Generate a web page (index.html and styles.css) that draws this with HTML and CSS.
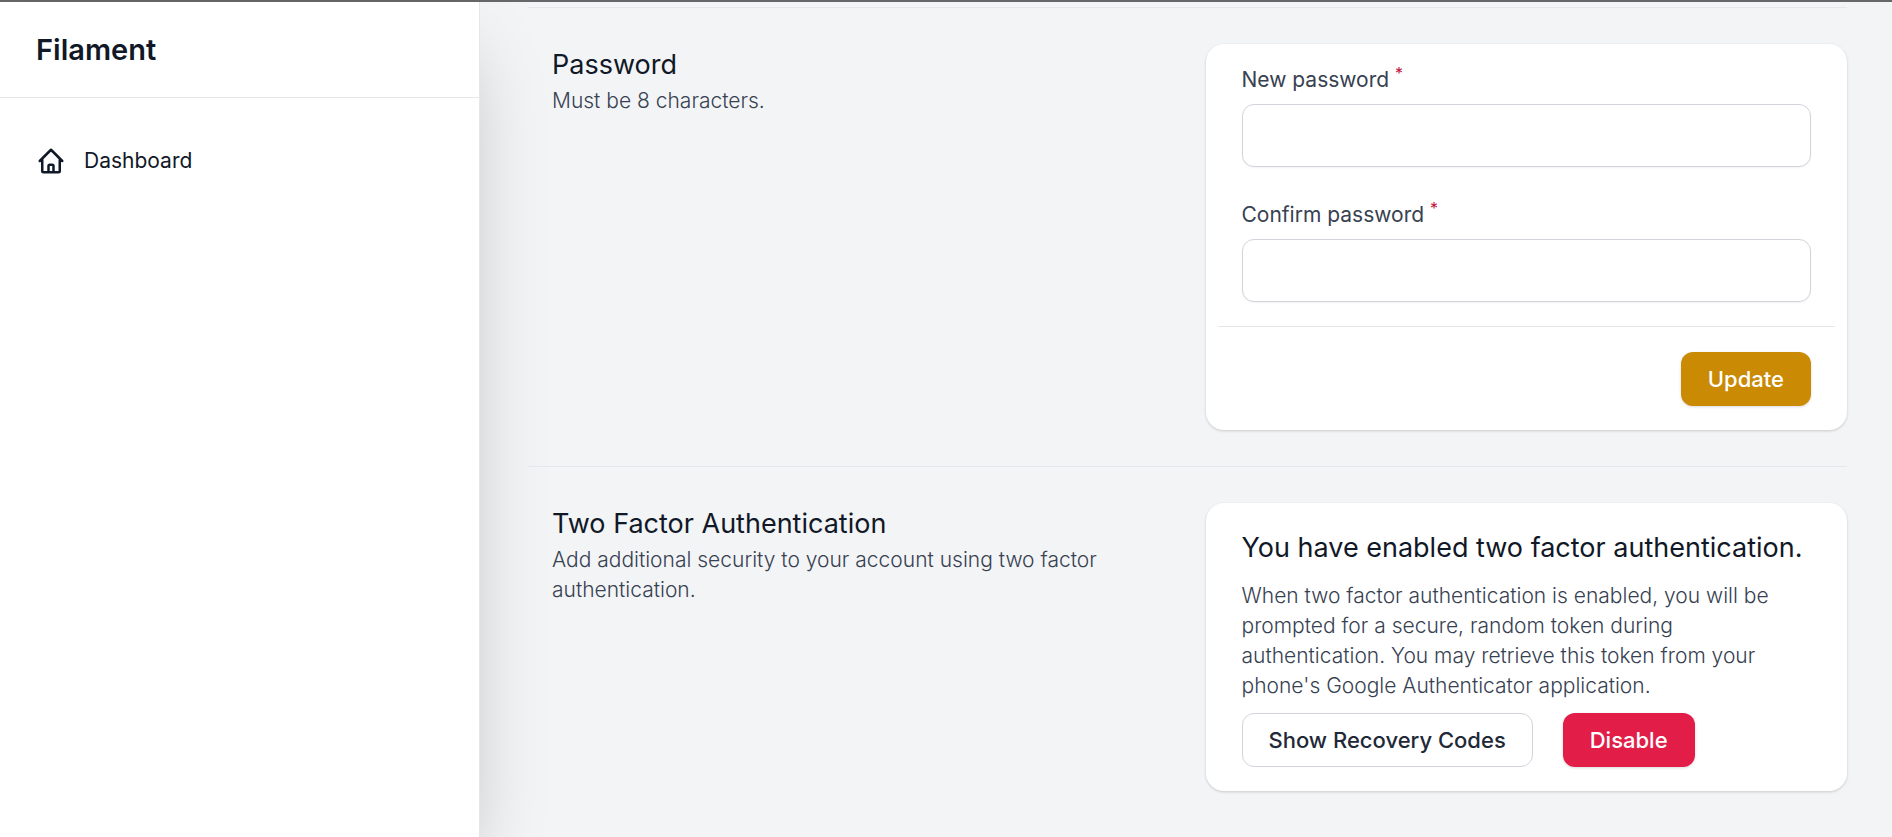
FILE: index.html
```html
<!DOCTYPE html>
<html lang="en">
<head>
<meta charset="utf-8">
<meta name="viewport" content="width=device-width, initial-scale=1">
<title>Filament</title>
<link rel="stylesheet" href="styles.css">
</head>
<body>
<div class="app">
  <aside class="sidebar">
    <header class="sidebar-header"><a class="brand" href="#">Filament</a></header>
    <nav class="sidebar-nav">
      <a class="nav-item" href="#">
        <svg class="nav-icon" viewBox="0 0 24 24" fill="none" stroke="currentColor" stroke-width="2" stroke-linecap="round" stroke-linejoin="round" aria-hidden="true"><path d="M3 12l2-2m0 0l7-7 7 7M5 10v10a1 1 0 001 1h3m10-11l2 2m-2-2v10a1 1 0 01-1 1h-3m-6 0a1 1 0 001-1v-4a1 1 0 011-1h2a1 1 0 011 1v4a1 1 0 001 1m-6 0h6"/></svg>
        <span>Dashboard</span>
      </a>
    </nav>
  </aside>
  <main class="content">
    <section class="section">
      <div class="section-intro">
        <h3 class="section-title">Password</h3>
        <p class="text">Must be 8 characters.</p>
      </div>
      <form class="card">
        <div class="fields">
          <div class="field">
            <label class="label" for="new-password">New password <sup class="required">*</sup></label>
            <input class="input" id="new-password" type="password" required>
          </div>
          <div class="field">
            <label class="label" for="confirm-password">Confirm password <sup class="required">*</sup></label>
            <input class="input" id="confirm-password" type="password" required>
          </div>
        </div>
        <div class="card-footer">
          <button class="button button-primary" type="submit">Update</button>
        </div>
      </form>
    </section>
    <section class="section">
      <div class="section-intro">
        <h3 class="section-title">Two Factor Authentication</h3>
        <p class="text">Add additional security to your account using two factor authentication.</p>
      </div>
      <div class="card card-body">
        <h3 class="card-title">You have enabled two factor authentication.</h3>
        <p class="text">When two factor authentication is enabled, you will be prompted for a secure, random token during authentication. You may retrieve this token from your phone's Google Authenticator application.</p>
        <div class="actions">
          <button class="button button-secondary" type="button">Show Recovery Codes</button>
          <button class="button button-danger" type="button">Disable</button>
        </div>
      </div>
    </section>
  </main>
</div>
</body>
</html>
```
FILE: styles.css
```css
* { box-sizing: border-box; }

body {
  margin: 0;
  background: #f3f4f6;
  color: #111827;
  font-family: Inter, "Liberation Sans", sans-serif;
  font-size: 21px;
  font-weight: 400;
  line-height: 30px;
}

h3, p { margin: 0; }
a { color: inherit; text-decoration: none; }

.app {
  display: flex;
  min-height: 100vh;
  border-top: 2px solid #676769;
}

.sidebar {
  flex: 0 0 480px;
  background: #fff;
  border-right: 1px solid #e5e7eb;
  box-shadow: 0 38px 75px -18px rgba(0, 0, 0, 0.25);
}

.sidebar-header {
  display: flex;
  align-items: center;
  height: 96px;
  padding: 0 36px;
  border-bottom: 1px solid #e5e7eb;
}

.brand {
  font-size: 29px;
  font-weight: 600;
}

.sidebar-nav { padding: 36px 24px; }

.nav-item {
  display: flex;
  align-items: center;
  gap: 18px;
  padding: 12px;
}

.nav-icon {
  width: 30px;
  height: 30px;
}

.content {
  flex: 1;
  min-width: 0;
  padding: 5px 45px 0 48px;
}

.section {
  display: grid;
  grid-template-columns: 1fr 1fr;
  gap: 36px;
  align-items: start;
  padding: 36px 0;
  border-top: 1px solid #e5e7eb;
}

.section-intro { padding: 0 24px; }

.section-title {
  font-size: 27px;
  font-weight: 400;
  line-height: 42px;
}

.text {
  color: #374151;
  font-weight: 300;
}

.card {
  background: #fff;
  border-radius: 18px;
  box-shadow: 0 1px 3px rgba(0, 0, 0, 0.1), 0 1px 3px rgba(0, 0, 0, 0.08);
}

.fields {
  display: flex;
  flex-direction: column;
  gap: 36px;
  padding: 24px 36px;
}

.field {
  display: flex;
  flex-direction: column;
  gap: 12px;
}

.label {
  color: #374151;
  line-height: 24px;
}

.required {
  color: #be123c;
  font-size: 16px;
  line-height: 0;
}

.input {
  width: 100%;
  height: 63px;
  padding: 0 18px;
  border: 1px solid #d1d5db;
  border-radius: 12px;
  background: #fff;
  box-shadow: 0 1px 2px rgba(0, 0, 0, 0.05);
  font: inherit;
}

.card-footer {
  display: flex;
  justify-content: flex-end;
  margin: 0 12px;
  padding: 25px 24px 24px;
  border-top: 1px solid #e5e7eb;
}

.button {
  height: 54px;
  padding: 0 26px;
  border: 1px solid transparent;
  border-radius: 12px;
  font: inherit;
  font-size: 22px;
  font-weight: 500;
}

.button-primary,
.button-danger {
  color: #fff;
  box-shadow: 0 1px 3px rgba(0, 0, 0, 0.15);
}

.button-primary { background: #ca8a04; }
.button-danger { background: #e11d48; }

.button-secondary {
  background: #fff;
  border-color: #d1d5db;
  color: #1f2937;
}

.card-body { padding: 24px 36px; }

.card-title {
  margin-bottom: 12px;
  font-size: 27px;
  font-weight: 400;
  line-height: 42px;
}

.actions {
  display: flex;
  gap: 30px;
  margin-top: 12px;
}
```
